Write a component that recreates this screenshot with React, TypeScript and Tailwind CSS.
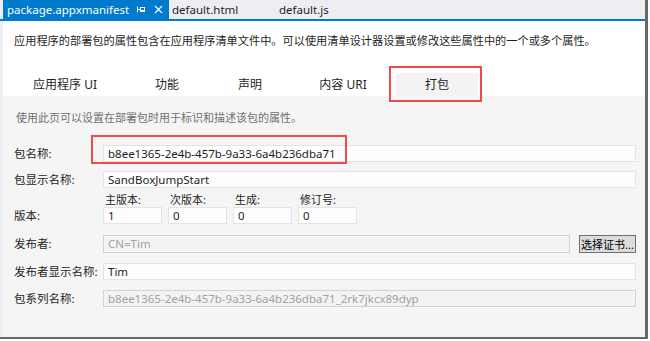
import React from 'react';

const font = { fontFamily: '"Noto Sans", "Noto Sans CJK SC", sans-serif' };

const PinIcon: React.FC = () => (
  <svg width="10" height="9" viewBox="0 0 10 9" className="shrink-0">
    <path d="M1.5 1.5v6M1.5 4.5h2.5" stroke="white" strokeWidth="1" fill="none" />
    <rect x="4.5" y="2.5" width="4" height="4" stroke="white" strokeWidth="1" fill="none" />
    <path d="M4.5 5.5h4" stroke="white" strokeWidth="1" />
  </svg>
);

const CloseIcon: React.FC = () => (
  <svg width="9" height="9" viewBox="0 0 9 9" className="shrink-0">
    <path d="M1 1l7 7M8 1l-7 7" stroke="white" strokeWidth="1.2" />
  </svg>
);

const Field: React.FC<{ value: string; disabled?: boolean; className?: string }> = ({ value, disabled, className }) => (
  <div
    className={
      'h-[17px] border flex items-center pl-[4px] text-[11.5px] leading-none whitespace-nowrap overflow-hidden ' +
      (disabled
        ? 'bg-[#f3f3f3] border-[#d2d2d2] text-[#a2a2a2] '
        : 'bg-[#fdfdfd] border-[#e2e2e8] text-[#1e1e1e] ') +
      (className ?? '')
    }
  >
    {value}
  </div>
);

const Row: React.FC<{ label: string; children: React.ReactNode; className?: string }> = ({ label, children, className }) => (
  <div className={'flex items-center ' + (className ?? '')}>
    <div className="w-[89px] shrink-0 text-[11.5px] text-[#1e1e1e] leading-none">{label}</div>
    <div className="flex-1 flex items-center">{children}</div>
  </div>
);

const tabs = [
  { label: '应用程序 UI', cls: 'ml-[21px]' },
  { label: '功能', cls: 'ml-[20px]' },
  { label: '声明', cls: 'ml-[1px]' },
  { label: '内容 URI', cls: 'ml-[11px]' },
  { label: '打包', cls: 'ml-[12px] bg-[#f3f3f3]' },
];

export default function App() {
  return (
    <div className="w-[650px] h-[341px] bg-white relative overflow-hidden" style={font}>
      <div className="w-[648px] h-[339px] flex flex-col border-r-[3px] border-b-[2px] border-[#686868]">
        {/* document tabs */}
        <div className="h-[19px] bg-[#eeeef2] flex items-stretch pl-[3px] shrink-0">
          <div className="w-[166px] bg-[#007acc] flex items-center pl-[4px] pr-[6px] text-white text-[11.5px] whitespace-nowrap">
            <span>package.appxmanifest</span>
            <span className="ml-auto flex items-center gap-[8px]">
              <PinIcon />
              <CloseIcon />
            </span>
          </div>
          <div className="flex items-center text-[11.5px] text-[#1e1e1e] ml-[3px] w-[107px]">default.html</div>
          <div className="flex items-center text-[11.5px] text-[#1e1e1e]">default.js</div>
        </div>
        <div className="h-[2px] bg-[#007acc] shrink-0" />

        <div className="flex-1 flex flex-col border-l-[3px] border-[#eeeef2]">
          <div className="pl-[11px] pt-[12px] text-[11.2px] leading-[16px] text-[#1e1e1e]">
            应用程序的部署包的属性包含在应用程序清单文件中。可以使用清单设计器设置或修改这些属性中的一个或多个属性。
          </div>

          <div className="flex h-[23px] mt-[24px] items-stretch">
            {tabs.map((t) => (
              <div key={t.label} className={'w-[82px] flex items-center justify-center text-[12px] text-[#1e1e1e] ' + t.cls}>
                {t.label}
              </div>
            ))}
          </div>

          <div className="flex-1 bg-[#f5f5f5] pl-[11px] pr-[9px] flex flex-col">
            <div className="pt-[14px] text-[11px] leading-[16px] text-[#717171] pl-[2px]">
              使用此页可以设置在部署包时用于标识和描述该包的属性。
            </div>

            <Row label="包名称:" className="mt-[19px]">
              <Field value="b8ee1365-2e4b-457b-9a33-6a4b236dba71" className="flex-1" />
            </Row>
            <Row label="包显示名称:" className="mt-[9px]">
              <Field value="SandBoxJumpStart" className="flex-1" />
            </Row>

            <div className="flex mt-[5px]">
              <div className="w-[89px] shrink-0 text-[11.5px] text-[#1e1e1e] leading-none self-end pb-[3px]">版本:</div>
              <div className="flex gap-[6px]">
                {[
                  ['主版本:', '1'],
                  ['次版本:', '0'],
                  ['生成:', '0'],
                  ['修订号:', '0'],
                ].map(([l, v]) => (
                  <div key={l} className="flex flex-col w-[59px]">
                    <div className="text-[11px] leading-[13px] h-[14px] text-[#1e1e1e] pl-[2px]">{l}</div>
                    <Field value={v} />
                  </div>
                ))}
              </div>
            </div>

            <Row label="发布者:" className="mt-[11px]">
              <Field value="CN=Tim" disabled className="flex-1 h-[18px]" />
              <div className="ml-[9px] w-[57px] h-[18px] bg-[#dcdcdc] border border-[#707070] flex items-center justify-center text-[11px] text-black whitespace-nowrap leading-none">
                选择证书...
              </div>
            </Row>
            <Row label="发布者显示名称:" className="mt-[10px]">
              <Field value="Tim" className="flex-1" />
            </Row>
            <Row label="包系列名称:" className="mt-[10px]">
              <Field value="b8ee1365-2e4b-457b-9a33-6a4b236dba71_2rk7jkcx89dyp" disabled className="flex-1" />
            </Row>
          </div>
        </div>
      </div>

      {/* annotation boxes */}
      <div className="absolute left-[389px] top-[66px] w-[93px] h-[36px] border-2 border-[#f04a4a]" />
      <div className="absolute left-[91px] top-[135px] w-[256px] h-[29px] border-2 border-[#f04a4a]" />
    </div>
  );
}
